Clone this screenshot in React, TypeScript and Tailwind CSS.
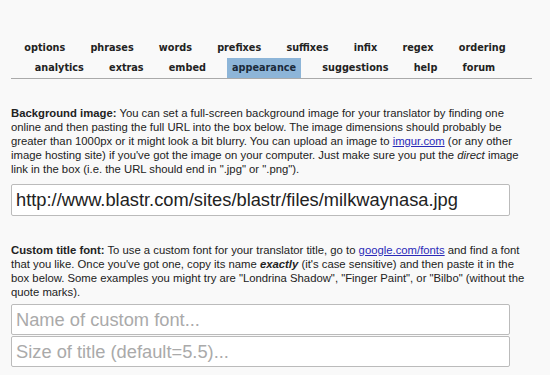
const tabsTop = ['options', 'phrases', 'words', 'prefixes', 'suffixes', 'infix', 'regex', 'ordering']
const tabsBottom = ['analytics', 'extras', 'embed', 'appearance', 'suggestions', 'help', 'forum']

function Tab({ label }: { label: string }) {
  const active = label === 'appearance'
  return (
    <span
      className={`mx-[8.6px] h-[20px] leading-[20px] text-[9.7px] font-bold ${
        active ? 'px-[5px] bg-[#8db5d8] text-[#1a2a3a]' : 'px-[4px] text-[#222]'
      }`}
    >
      {label}
    </span>
  )
}

export default function App() {
  return (
    <div className="min-h-screen bg-[#f9f9f9] text-[#222] font-['Liberation_Sans',Arial,sans-serif]">
      {/* ── Tab nav ─────────────────────────────────────── */}
      <div className="pl-[11px] pt-[38px]">
        <div className="w-[521px] pr-[13px] border-b border-[#aaa] font-['DejaVu_Sans',Verdana,sans-serif]">
          <div className="flex justify-center">
            {tabsTop.map((t) => (
              <Tab key={t} label={t} />
            ))}
          </div>
          <div className="flex justify-center">
            {tabsBottom.map((t) => (
              <Tab key={t} label={t} />
            ))}
          </div>
        </div>
      </div>

      <div className="px-[11px] w-[540px]">
        {/* Background image */}
        <p className="mt-[27px] text-[11.3px] leading-[14px] whitespace-nowrap">
          <b>Background image:</b> You can set a full-screen background image for your translator by finding one
          <br />
          online and then pasting the full URL into the box below. The image dimensions should probably be
          <br />
          greater than 1000px or it might look a bit blurry. You can upload an image to{' '}
          <a className="text-[#2a2ab8] underline">imgur.com</a> (or any other
          <br />
          image hosting site) if you've got the image on your computer. Just make sure you put the <i>direct</i> image
          <br />
          link in the box (i.e. the URL should end in ".jpg" or ".png").
        </p>
        <input
          className="mt-[8px] block w-[499px] h-[32px] px-[4px] bg-white border border-[#bbb] rounded-[2px] text-[18.3px] text-[#222] outline-none"
          defaultValue="http://www.blastr.com/sites/blastr/files/milkwaynasa.jpg"
        />

        {/* Custom title font */}
        <p className="mt-[27px] text-[11.3px] leading-[14px] whitespace-nowrap">
          <b>Custom title font:</b> To use a custom font for your translator title, go to{' '}
          <a className="text-[#2a2ab8] underline">google.com/fonts</a> and find a font
          <br />
          that you like. Once you've got one, copy its name{' '}
          <b>
            <i>exactly</i>
          </b>{' '}
          (it's case sensitive) and then paste it in the
          <br />
          box below. Some examples you might try are "Londrina Shadow", "Finger Paint", or "Bilbo" (without the
          <br />
          quote marks).
        </p>
        <input
          className="mt-[5px] block w-[499px] h-[31px] px-[4px] bg-white border border-[#bbb] rounded-[2px] text-[18.3px] placeholder:text-[#aaa] outline-none"
          placeholder="Name of custom font..."
        />
        <input
          className="mt-[1px] block w-[499px] h-[31px] px-[4px] bg-white border border-[#bbb] rounded-[2px] text-[18.3px] placeholder:text-[#aaa] outline-none"
          placeholder="Size of title (default=5.5)..."
        />
      </div>
    </div>
  )
}
